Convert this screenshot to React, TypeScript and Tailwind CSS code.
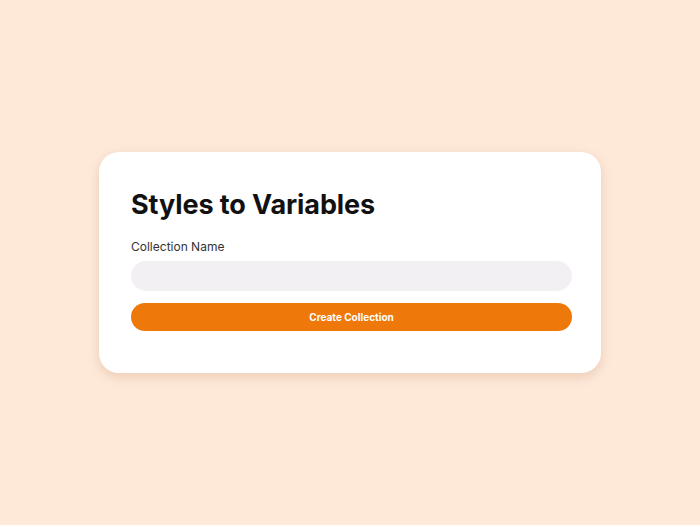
export default function App() {
  return (
    <div className="w-full h-screen bg-[#fee9d9] flex items-center justify-center font-['Inter',sans-serif]">
      <div className="w-[502px] h-[221px] bg-white rounded-[20px] pt-[36px] pl-8 pr-[29px] shadow-[0_4px_12px_rgba(180,120,80,0.25)]">
        <h1 className="text-[27px] leading-[34px] font-bold text-[#111111] tracking-[-0.1px]">
          Styles to Variables
        </h1>
        <label className="block mt-[17px] text-[12px] leading-[15px] text-[#333333]">
          Collection Name
        </label>
        <input
          type="text"
          className="block mt-[7px] w-full h-[30px] rounded-full bg-[#f2f0f3] px-4 text-[13px] outline-none"
        />
        <button className="mt-3 w-full h-[28px] rounded-full bg-[#ee7809] text-white text-[10px] font-bold flex items-center justify-center">
          Create Collection
        </button>
      </div>
    </div>
  );
}
